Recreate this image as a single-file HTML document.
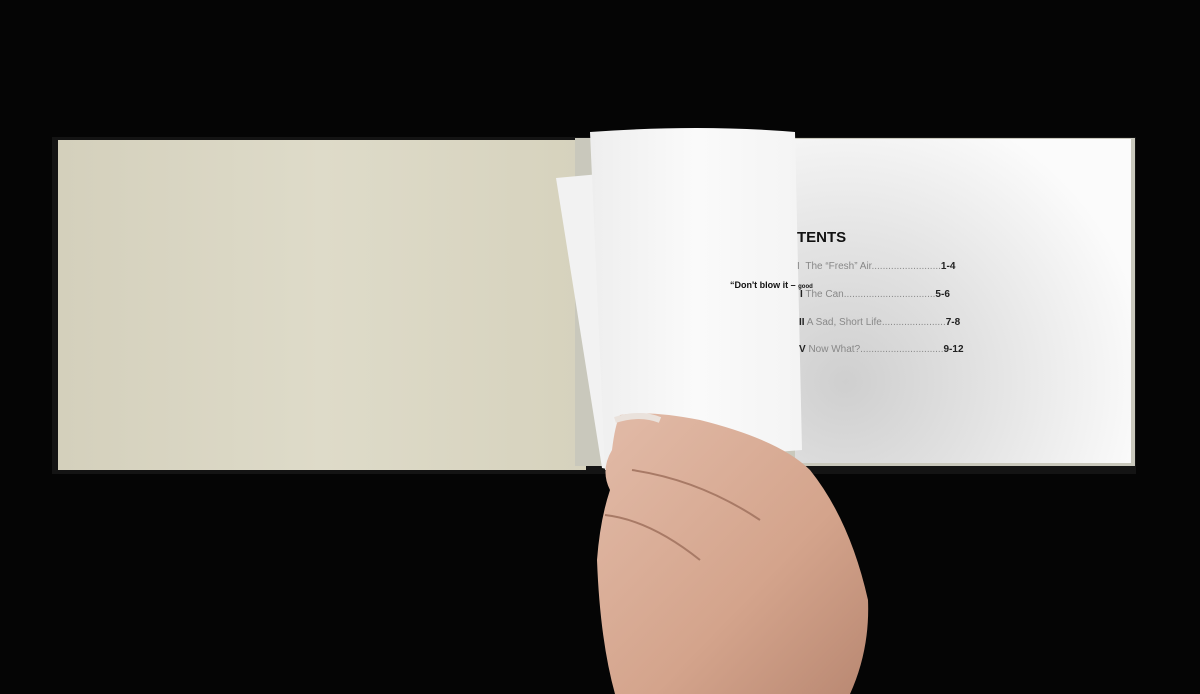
<!DOCTYPE html>
<html><head><style>
body{margin:0;width:1200px;height:694px;background:#050505;overflow:hidden;position:relative;font-family:"Liberation Sans",sans-serif}
.abs{position:absolute}
</style></head><body>
<svg class="abs" style="left:0;top:0" width="1200" height="694">
<defs>
<linearGradient id="cream" x1="0" x2="1" y1="0" y2="0">
<stop offset="0" stop-color="#d4d0bc"/><stop offset="0.5" stop-color="#dedbc9"/><stop offset="1" stop-color="#d6d2bd"/></linearGradient>
<radialGradient id="rp" cx="0.15" cy="0.75" r="0.9">
<stop offset="0" stop-color="#cfcfcf"/><stop offset="0.45" stop-color="#e2e2e2"/><stop offset="1" stop-color="#fbfbfb"/></radialGradient>
<linearGradient id="fp" x1="0" x2="1" y1="0" y2="0">
<stop offset="0" stop-color="#eeeeee"/><stop offset="0.5" stop-color="#fafafa"/><stop offset="1" stop-color="#f4f4f4"/></linearGradient>
<linearGradient id="skin" x1="0" x2="1" y1="0" y2="1">
<stop offset="0" stop-color="#e2bba8"/><stop offset="0.6" stop-color="#d4a48c"/><stop offset="1" stop-color="#b98872"/></linearGradient>
</defs>
<rect x="52" y="137" width="1084" height="337" fill="#141414"/>
<rect x="58" y="140" width="528" height="330" fill="url(#cream)"/>
<rect x="575" y="138" width="560" height="328" fill="#c9c8bc"/>
<rect x="795" y="139" width="336" height="324" fill="url(#rp)"/>
<path d="M556,178 L600,174 L612,470 L602,468 Z" fill="#f2f2f2"/>
<path d="M590,132 Q700,124 795,132 L802,450 Q720,456 625,470 L605,470 Z" fill="url(#fp)"/>
<path d="M620,415 Q650,410 700,420 Q780,440 810,470 Q850,520 868,600 Q870,650 850,694 L615,694 Q600,640 597,560 Q600,520 610,490 Q600,470 612,450 Q615,425 620,415 Z" fill="url(#skin)"/>
<path d="M615,420 Q640,412 660,420" stroke="#eae2dc" stroke-width="6" fill="none"/>
<path d="M632,470 Q700,480 760,520" stroke="#a87a66" stroke-width="2" fill="none"/>
<path d="M605,515 Q650,520 700,560" stroke="#a87a66" stroke-width="2" fill="none"/>
</svg>
<div class="abs" style="left:797px;top:229px;font-weight:bold;font-size:15px;color:#111">TENTS</div>
<div class="abs" style="left:730px;top:280px;font-weight:bold;font-size:9px;color:#111">“Don't blow it – <span style="font-size:6px">good</span></div>
<div class="abs" style="left:797px;top:262px;font-size:10px;color:#888;line-height:1">I &nbsp;The “Fresh” Air.........................<b style="color:#222">1-4</b></div>
<div class="abs" style="left:800px;top:290px;font-size:10px;color:#888;line-height:1"><b style="color:#222">I</b> The Can.................................<b style="color:#222">5-6</b></div>
<div class="abs" style="left:799px;top:318px;font-size:10px;color:#888;line-height:1"><b style="color:#222">II</b> A Sad, Short Life.......................<b style="color:#222">7-8</b></div>
<div class="abs" style="left:799px;top:345px;font-size:10px;color:#888;line-height:1"><b style="color:#222">V</b> Now What?..............................<b style="color:#222">9-12</b></div>
</body></html>
